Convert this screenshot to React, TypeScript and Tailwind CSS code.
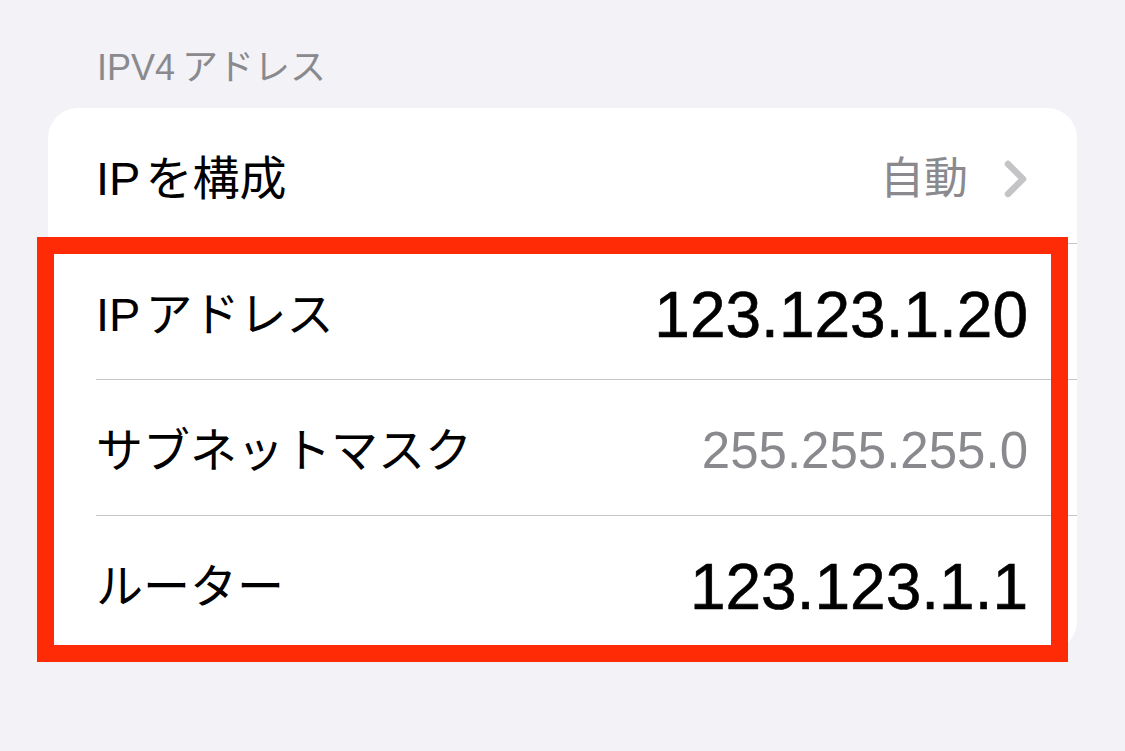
const rows = [
  { latin: 'IP', label: 'を構成', value: '自動', kind: 'link' },
  { latin: 'IP', label: 'アドレス', value: '123.123.1.20', kind: 'big' },
  { latin: '', label: 'サブネットマスク', value: '255.255.255.0', kind: 'muted' },
  { latin: '', label: 'ルーター', value: '123.123.1.1', kind: 'big' },
];

function Chevron() {
  return (
    <svg width="24" height="38" viewBox="0 0 24 38" fill="none" className="ml-[36px]">
      <path d="M4 4 L19 19 L4 34" stroke="#c4c4c7" strokeWidth="6.5" strokeLinecap="round" strokeLinejoin="round" />
    </svg>
  );
}

export default function App() {
  return (
    <div
      className="relative w-full h-[751px] overflow-hidden bg-[#f2f2f7] px-[48px]"
      style={{ fontFamily: '"Liberation Sans", "Noto Sans CJK JP", sans-serif' }}
    >
      <div className="pt-[50px] pl-[49px] text-[36px] leading-[36px] text-[#8a8a8e] mb-[22px]">
        IPV4<span className="ml-[7px]">アドレス</span>
      </div>

      <div className="bg-white rounded-[30px] overflow-hidden">
        {rows.map((row, i) => (
          <div key={row.label} className="pl-[48px]">
            {i > 0 && <div className="h-px bg-[#c6c6c8]" />}
            <div className="flex items-center justify-between h-[135px] pt-[6px] pr-[49px]">
              <span className="text-[47px] leading-none text-black">
                {row.latin}
                {row.latin ? <span className="ml-[5px]">{row.label}</span> : row.label}
              </span>
              {row.kind === 'link' && (
                <div className="flex items-center">
                  <span className="text-[44px] leading-none text-[#8a8a8e]">{row.value}</span>
                  <Chevron />
                </div>
              )}
              {row.kind === 'big' && (
                <span className="text-[64px] leading-none text-black [-webkit-text-stroke:0.6px_black]">{row.value}</span>
              )}
              {row.kind === 'muted' && <span className="text-[51px] leading-none text-[#8a8a8e]">{row.value}</span>}
            </div>
          </div>
        ))}
      </div>

      <div className="absolute left-[37px] top-[237px] w-[1031px] h-[425px] border-[17px] border-[#ff2a06] pointer-events-none" />
    </div>
  );
}
